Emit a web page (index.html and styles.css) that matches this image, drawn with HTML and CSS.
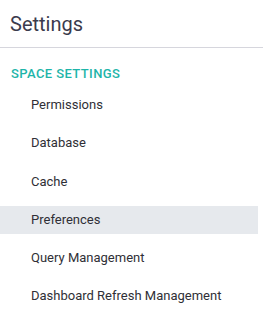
FILE: index.html
```html
<!DOCTYPE html>
<html lang="en">
<head>
    <meta charset="UTF-8">
    <title>Settings</title>
    <link rel="stylesheet" href="styles.css">
</head>
<body>

<div class="sidebar">
    <div class="header">
        <h2>Settings</h2>
    </div>

    <div class="section">
        <div class="section-title">SPACE SETTINGS</div>
        <ul class="menu">
            <li>Permissions</li>
            <li>Database</li>
            <li>Cache</li>
            <li class="active">Preferences</li>
            <li>Query Management</li>
            <li>Dashboard Refresh Management</li>
        </ul>
    </div>
</div>

</body>
</html>
```

FILE: styles.css
```css
/* General Styles */
body {
    font-family: Roboto, "Liberation Sans", sans-serif;
    background-color: #ffffff;
    margin: 0;
    padding: 0;
}

.sidebar {
    width: 263px;
}

.header {
    height: 47px;
    border-bottom: 1px solid #d6d6dd;
    display: flex;
    align-items: center;
    padding-left: 10px;
}

h2 {
    margin: 0;
    font-size: 20px;
    font-weight: 400;
    color: #3b3b4d;
}

.section-title {
    margin: 18px 0 0 11px;
    height: 16px;
    line-height: 16px;
    font-size: 13px;
    font-weight: 500;
    color: #1eb5a9;
    letter-spacing: 0.4px;
}

.menu {
    list-style: none;
    margin: 9px 0 0 0;
    padding: 0;
    width: 258px;
    display: flex;
    flex-direction: column;
    gap: 10.3px;
}

.menu li {
    height: 28px;
    line-height: 28px;
    padding-left: 31px;
    font-size: 13px;
    color: #2f2f36;
}

.menu li.active {
    background-color: #e6e9ed;
}
```
